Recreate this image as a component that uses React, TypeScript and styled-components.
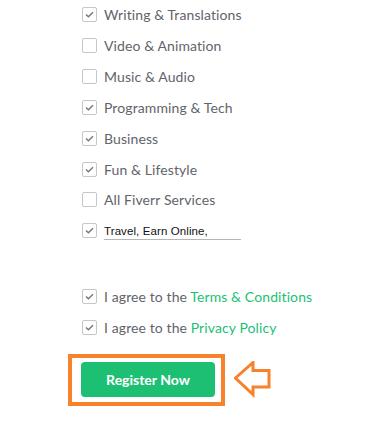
import { FC } from 'react';
import styled, { createGlobalStyle } from 'styled-components';

const Global = createGlobalStyle`
  html, body { margin: 0; padding: 0; background: #fff; }
  body { font-family: Lato, "Open Sans", sans-serif; }
`

const Page = styled.div`
  width: 387px;
  height: 423px;
  padding-left: 82px;
  box-sizing: border-box;
  overflow: hidden;
`

const List = styled.div`
  display: flex;
  flex-direction: column;
  margin-top: -0.5px;
`

const Row = styled.label<{ $h?: number }>`
  display: flex;
  align-items: center;
  height: ${(p) => p.$h ?? 30.85}px;
  gap: 7px;
  font-size: 14px;
  color: #62646a;
  letter-spacing: 0.1px;
`

const Box = styled.span<{ $on: boolean }>`
  width: 15px;
  height: 15px;
  box-sizing: border-box;
  border: 1px solid #c5c6c9;
  border-radius: 2px;
  display: flex;
  align-items: center;
  justify-content: center;
  flex: none;
  svg { visibility: ${(p) => (p.$on ? 'visible' : 'hidden')}; }
`

const Other = styled.span`
  width: 137px;
  border-bottom: 1px solid #b5b6ba;
  font: 11.5px "Liberation Sans", Arial, sans-serif;
  color: #111;
  line-height: 13px;
  padding-bottom: 1px;
  margin-top: 4px;
`

const Agree = styled.div`
  margin-top: 35px;
  display: flex;
  flex-direction: column;
`

const Link = styled.span`
  color: #1dbf73;
`

const Footer = styled.div`
  margin-top: 11px;
  margin-left: -14px;
  display: flex;
  align-items: center;
  gap: 9px;
`

const Highlight = styled.div`
  border: 4px solid #f7822b;
  padding: 4px 6px 5px 9px;
  display: flex;
`

const Button = styled.button`
  width: 134px;
  height: 35px;
  border: none;
  border-radius: 4px;
  background: #1dbf73;
  color: #fff;
  font: 700 14px Lato, "Open Sans", sans-serif;
  cursor: pointer;
`

const Check: FC<{ on: boolean }> = ({ on }) => (
  <Box $on={on}>
    <svg width="9" height="7" viewBox="0 0 9 7">
      <path d="M1 3.6 L3.4 5.8 L8 1.2" fill="none" stroke="#74767e" strokeWidth="1.4" />
    </svg>
  </Box>
)

const categories: [string, boolean][] = [
  ['Writing & Translations', true],
  ['Video & Animation', false],
  ['Music & Audio', false],
  ['Programming & Tech', true],
  ['Business', true],
  ['Fun & Lifestyle', true],
  ['All Fiverr Services', false],
]

export default function App() {
  return (
    <Page>
      <Global />
      <List>
        {categories.map(([name, on]) => (
          <Row key={name}>
            <Check on={on} />
            <span>{name}</span>
          </Row>
        ))}
        <Row>
          <Check on />
          <Other>Travel, Earn Online,</Other>
        </Row>
      </List>
      <Agree>
        <Row $h={31}>
          <Check on />
          <span>I agree to the <Link>Terms &amp; Conditions</Link></span>
        </Row>
        <Row $h={31}>
          <Check on />
          <span>I agree to the <Link>Privacy Policy</Link></span>
        </Row>
      </Agree>
      <Footer>
        <Highlight>
          <Button>Register Now</Button>
        </Highlight>
        <svg width="38" height="38" viewBox="0 0 38 38">
          <path d="M1.5 17 L19 1.5 L19 9.5 L35 9.5 L35 26 L19 26 L19 33.5 Z" fill="#fff" stroke="#f7822b" strokeWidth="3" strokeLinejoin="miter" />
        </svg>
      </Footer>
    </Page>
  )
}
